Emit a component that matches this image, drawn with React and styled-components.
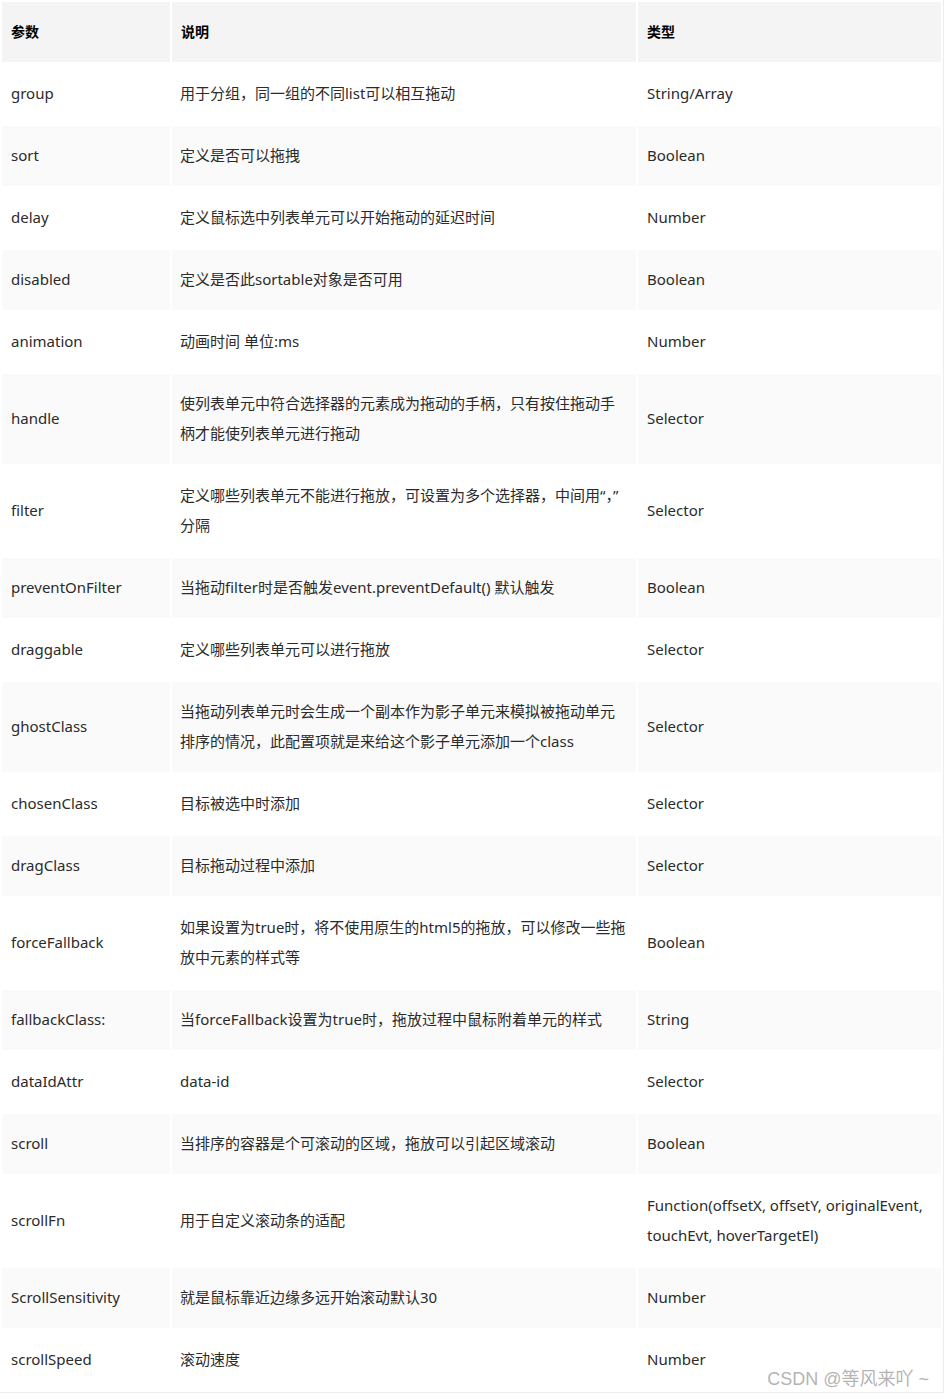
import styled, { createGlobalStyle } from "styled-components";

const GlobalStyle = createGlobalStyle`
  body {
    margin: 0;
    background: #fff;
    font-family: "Noto Sans", "Noto Sans CJK SC", sans-serif;
  }
`;

// parameter list of the sortable options
const rows = [
  { name: "group", desc: ["用于分组，同一组的不同list可以相互拖动"], type: ["String/Array"] },
  { name: "sort", desc: ["定义是否可以拖拽"], type: ["Boolean"] },
  { name: "delay", desc: ["定义鼠标选中列表单元可以开始拖动的延迟时间"], type: ["Number"] },
  { name: "disabled", desc: ["定义是否此sortable对象是否可用"], type: ["Boolean"] },
  { name: "animation", desc: ["动画时间 单位:ms"], type: ["Number"] },
  {
    name: "handle",
    desc: ["使列表单元中符合选择器的元素成为拖动的手柄，只有按住拖动手", "柄才能使列表单元进行拖动"],
    type: ["Selector"],
  },
  {
    name: "filter",
    desc: ["定义哪些列表单元不能进行拖放，可设置为多个选择器，中间用“，”", "分隔"],
    type: ["Selector"],
  },
  { name: "preventOnFilter", desc: ["当拖动filter时是否触发event.preventDefault() 默认触发"], type: ["Boolean"] },
  { name: "draggable", desc: ["定义哪些列表单元可以进行拖放"], type: ["Selector"] },
  {
    name: "ghostClass",
    desc: ["当拖动列表单元时会生成一个副本作为影子单元来模拟被拖动单元", "排序的情况，此配置项就是来给这个影子单元添加一个class"],
    type: ["Selector"],
  },
  { name: "chosenClass", desc: ["目标被选中时添加"], type: ["Selector"] },
  { name: "dragClass", desc: ["目标拖动过程中添加"], type: ["Selector"] },
  {
    name: "forceFallback",
    desc: ["如果设置为true时，将不使用原生的html5的拖放，可以修改一些拖", "放中元素的样式等"],
    type: ["Boolean"],
  },
  { name: "fallbackClass:", desc: ["当forceFallback设置为true时，拖放过程中鼠标附着单元的样式"], type: ["String"] },
  { name: "dataIdAttr", desc: ["data-id"], type: ["Selector"] },
  { name: "scroll", desc: ["当排序的容器是个可滚动的区域，拖放可以引起区域滚动"], type: ["Boolean"] },
  {
    name: "scrollFn",
    desc: ["用于自定义滚动条的适配"],
    type: ["Function(offsetX, offsetY, originalEvent,", "touchEvt, hoverTargetEl)"],
  },
  { name: "ScrollSensitivity", desc: ["就是鼠标靠近边缘多远开始滚动默认30"], type: ["Number"] },
  { name: "scrollSpeed", desc: ["滚动速度"], type: ["Number"] },
];

const Lines = ({ items }) =>
  items.map((line, i) => (
    <span key={i}>
      {i > 0 && <br />}
      {line}
    </span>
  ));

const App = () => {
  return (
    <>
      <GlobalStyle />
      <Wrapper>
        <Table>
          <colgroup>
            <col style={{ width: 168 }} />
            <col style={{ width: 464 }} />
            <col style={{ width: 303 }} />
          </colgroup>
          <thead>
            <tr>
              <HeadCell>参数</HeadCell>
              <HeadCell>说明</HeadCell>
              <HeadCell>类型</HeadCell>
            </tr>
          </thead>
          <tbody>
            {rows.map((row, index) => (
              <Row key={row.name} $shade={index % 2 === 1}>
                <Cell>{row.name}</Cell>
                <Cell>
                  <Lines items={row.desc} />
                </Cell>
                <Cell>
                  <Lines items={row.type} />
                </Cell>
              </Row>
            ))}
          </tbody>
        </Table>
        <Watermark>CSDN @等风来吖 ~</Watermark>
      </Wrapper>
    </>
  );
};

const Wrapper = styled.div`
  position: relative;
  width: 943px;
  height: 1392px;
  border-right: 1px solid #ececec;
  border-bottom: 1px solid #ececec;
  overflow: hidden;
`;

const Table = styled.table`
  table-layout: fixed;
  width: 943px;
  border-collapse: separate;
  border-spacing: 2px;
  color: #2b2b2b;
  font-size: 15px;
  line-height: 30px;
`;

const HeadCell = styled.th`
  height: 60px;
  padding: 0 9px 2px;
  box-sizing: border-box;
  background: #f4f4f4;
  color: #000;
  font-family: "Noto Sans CJK SC", sans-serif;
  font-weight: 700;
  font-size: 14px;
  text-align: left;
  vertical-align: middle;
`;

const Row = styled.tr`
  background: ${({ $shade }) => ($shade ? "#fafafa" : "#fff")};
`;

const Cell = styled.td`
  padding: 14px 8px 16px 9px;
  vertical-align: middle;
  white-space: nowrap;
  font-family: "Noto Sans", "Noto Sans CJK SC", sans-serif;

  &:nth-child(2) {
    padding-left: 8px;
  }
`;

const Watermark = styled.div`
  position: absolute;
  right: 14px;
  bottom: 2px;
  color: rgba(165, 165, 165, 0.85);
  font-family: "Liberation Sans", "Noto Sans CJK SC", sans-serif;
  font-size: 18px;
`;

export default App;
